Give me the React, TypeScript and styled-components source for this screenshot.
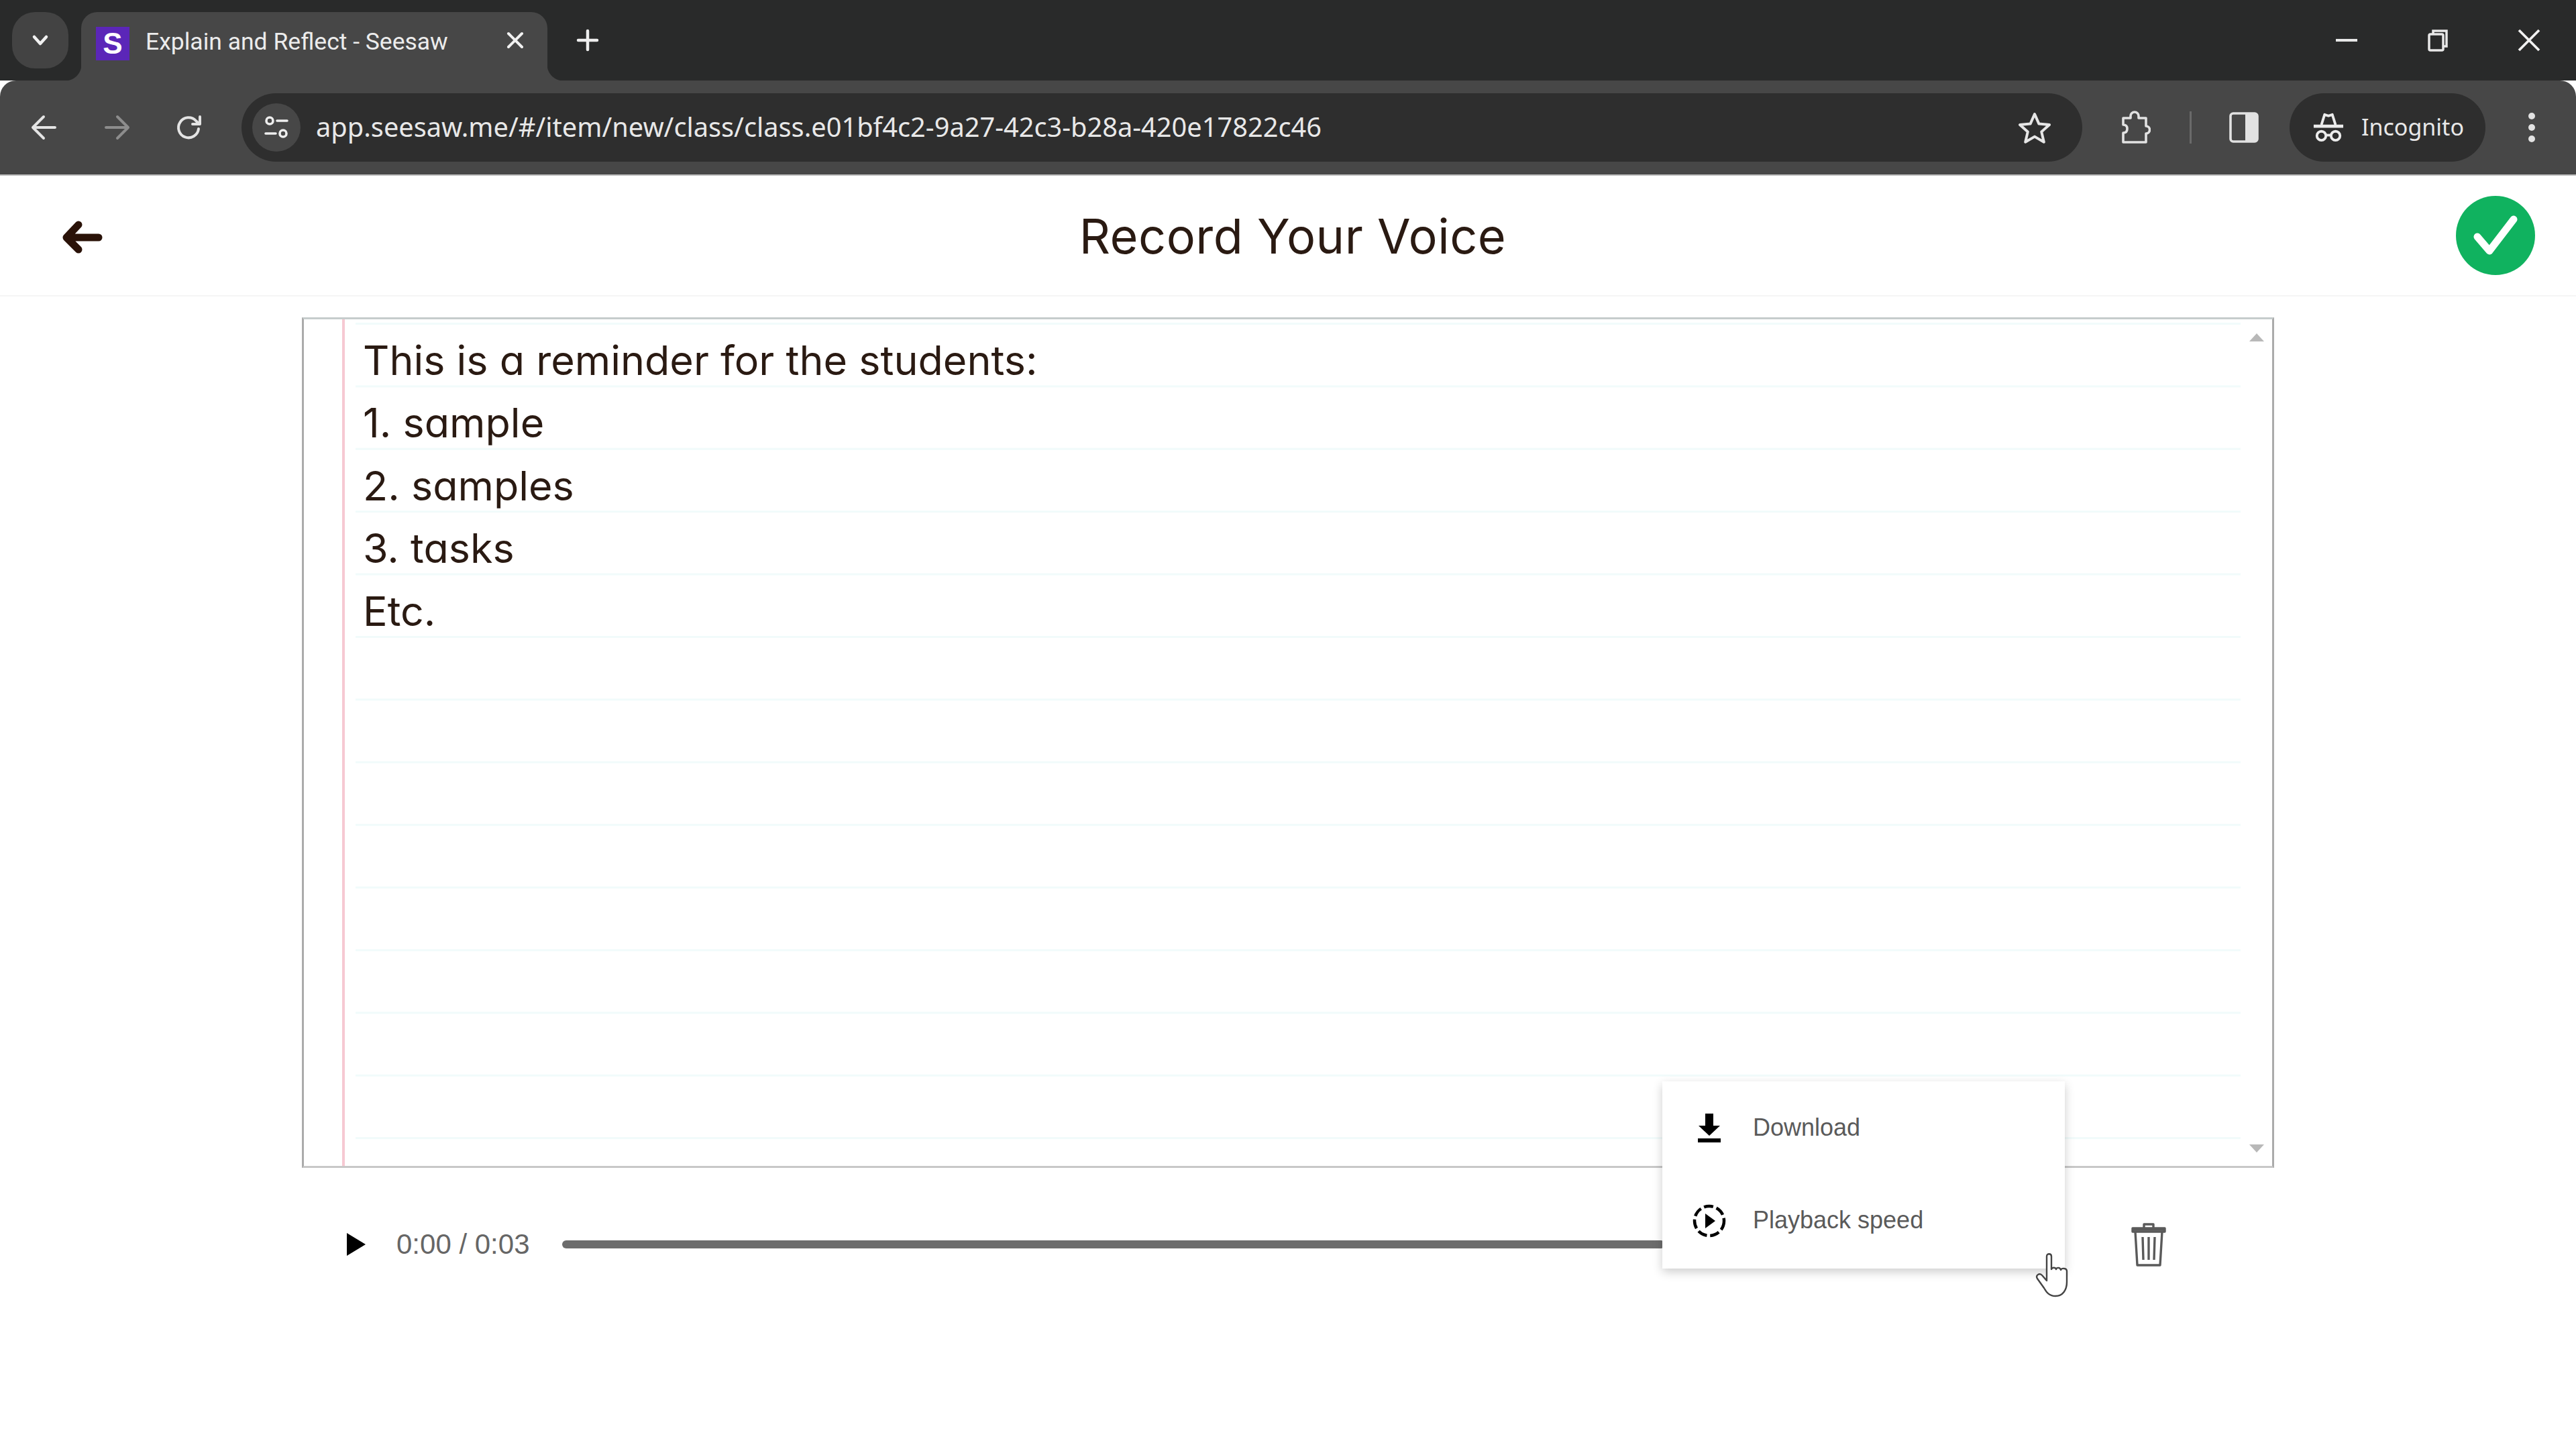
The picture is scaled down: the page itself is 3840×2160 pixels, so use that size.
import React from 'react';
import styled, { createGlobalStyle } from 'styled-components';

const GlobalStyle = createGlobalStyle`
  html, body {
    margin: 0;
    padding: 0;
    background: #ffffff;
  }
`;

const noteLines = ['This is a reminder for the students:', '1. sample', '2. samples', '3. tasks', 'Etc.'];

const App: React.FC = () => {
  return (
    <Page>
      <GlobalStyle />
      <TabStrip>
        <TabListButton>
          <svg width="30" height="30" viewBox="0 0 30 30" fill="none" stroke="#f1f1f1" strokeWidth="4.5" strokeLinecap="round" strokeLinejoin="round">
            <path d="M6 10l9 10 9-10" />
          </svg>
        </TabListButton>
        <Tab>
          <Favicon>S</Favicon>
          <TabTitle>Explain and Reflect - Seesaw</TabTitle>
          <TabClose>
            <svg width="30" height="30" viewBox="0 0 30 30" stroke="#f1f1f1" strokeWidth="4" strokeLinecap="round">
              <path d="M5 5l20 20M25 5L5 25" />
            </svg>
          </TabClose>
        </Tab>
        <NewTab>
          <svg width="34" height="34" viewBox="0 0 34 34" stroke="#eeeeee" strokeWidth="4.5" strokeLinecap="round">
            <path d="M17 3v28M3 17h28" />
          </svg>
        </NewTab>
        <WindowControls>
          <WindowButton>
            <svg width="34" height="8" viewBox="0 0 34 8" stroke="#e8e8e8" strokeWidth="4">
              <path d="M1 4h32" />
            </svg>
          </WindowButton>
          <WindowButton>
            <svg width="32" height="34" viewBox="0 0 32 34" fill="none" stroke="#e8e8e8" strokeWidth="3.5">
              <path d="M9 7V3h20v23h-4" />
              <rect x="3" y="8" width="21" height="24" rx="2" />
            </svg>
          </WindowButton>
          <WindowButton>
            <svg width="34" height="34" viewBox="0 0 34 34" stroke="#f1f1f1" strokeWidth="3.8">
              <path d="M2 2l30 30M32 2L2 32" />
            </svg>
          </WindowButton>
        </WindowControls>
      </TabStrip>

      <Toolbar>
        <NavButton>
          <svg width="40" height="40" viewBox="0 0 40 40" fill="none" stroke="#e4e4e4" strokeWidth="4" strokeLinecap="round" strokeLinejoin="round">
            <path d="M36 20H4M19 4L3 20l16 16" />
          </svg>
        </NavButton>
        <NavButton>
          <svg width="40" height="40" viewBox="0 0 40 40" fill="none" stroke="#8d8d8d" strokeWidth="4" strokeLinecap="round" strokeLinejoin="round">
            <path d="M4 20h32M21 4l16 16-16 16" />
          </svg>
        </NavButton>
        <NavButton>
          <svg width="40" height="40" viewBox="0 0 40 40" fill="none" stroke="#e4e4e4" strokeWidth="4" strokeLinecap="round" strokeLinejoin="round">
            <path d="M34 22a15 15 0 1 1-4-12l5 5" />
            <path d="M36 4v11H25" />
          </svg>
        </NavButton>
        <AddressBar>
          <SiteInfo>
            <svg width="38" height="38" viewBox="0 0 38 38" fill="none" stroke="#eeeeee" strokeWidth="3.6" strokeLinecap="round">
              <circle cx="9" cy="9" r="5" />
              <path d="M20 9h15M3 28h15" />
              <circle cx="29" cy="28" r="5" />
            </svg>
          </SiteInfo>
          <Url>app.seesaw.me/#/item/new/class/class.e01bf4c2-9a27-42c3-b28a-420e17822c46</Url>
          <StarSlot>
            <svg width="50" height="48" viewBox="0 0 50 48" fill="none" stroke="#e6e6e6" strokeWidth="4" strokeLinejoin="round">
              <path d="M25 4l6.4 14.6 15.600 1.400-11.800 10.400 3.600 15.300L25 37.600l-13.800 8.100 3.600-15.300L3 20l15.600-1.400z" />
            </svg>
          </StarSlot>
        </AddressBar>
        <IconSlot $width={158}>
          <svg width="46" height="50" viewBox="0 0 46 50" fill="none" stroke="#e2e2e2" strokeWidth="3.6" strokeLinejoin="round">
            <path d="M5 11h11V8a6 6 0 0 1 12 0v3h11v12a5.500 5.500 0 0 1 0 11v13H5V33c5 0 6-3 6-6s-1-6-6-6z" />
          </svg>
        </IconSlot>
        <ToolbarDivider />
        <IconSlot $width={98}>
          <svg width="44" height="46" viewBox="0 0 44 46" fill="none">
            <rect x="2" y="2" width="40" height="42" rx="4" stroke="#e2e2e2" strokeWidth="3.6" />
            <rect x="24" y="2" width="18" height="42" fill="#e2e2e2" />
          </svg>
        </IconSlot>
        <IncognitoPill>
          <svg width="46" height="46" viewBox="0 0 48 48" fill="none" stroke="#ececec" strokeWidth="4">
            <path d="M13 20l5-16 6 2 6-2 5 16" strokeLinejoin="round" />
            <path d="M1 22h46" strokeWidth="5" />
            <circle cx="13" cy="37" r="7" />
            <circle cx="35" cy="37" r="7" />
            <path d="M20 36h8" />
          </svg>
          <IncognitoLabel>Incognito</IncognitoLabel>
        </IncognitoPill>
        <MenuSlot>
          <svg width="12" height="46" viewBox="0 0 12 46" fill="#e2e2e2">
            <circle cx="6" cy="6" r="5" />
            <circle cx="6" cy="23" r="5" />
            <circle cx="6" cy="40" r="5" />
          </svg>
        </MenuSlot>
      </Toolbar>

      <Header>
        <BackButton>
          <svg width="61" height="49" viewBox="0 0 61 49" fill="none" stroke="#2a1208" strokeWidth="11" strokeLinecap="round" strokeLinejoin="round">
            <path d="M55 25H10M25 6L7 25l18 18" />
          </svg>
        </BackButton>
        <Title>Record Your Voice</Title>
        <DoneButton>
          <svg width="70" height="62" viewBox="0 0 70 62" fill="none" stroke="#ffffff" strokeWidth="11" strokeLinecap="round" strokeLinejoin="round">
            <path d="M8 33l18 21L62 7" />
          </svg>
        </DoneButton>
      </Header>

      <Paper>
        {noteLines.map((line) => (
          <NoteLine key={line}>{line}</NoteLine>
        ))}
        <ScrollArrow $dir="up" />
        <ScrollArrow $dir="down" />
      </Paper>

      <AudioRow>
        <PlayIcon />
        <TimeLabel>0:00 / 0:03</TimeLabel>
        <Slider />
        <TrashSlot>
          <svg width="52" height="66" viewBox="0 0 52 66" fill="none" stroke="#5a5a5a" strokeWidth="3.4" strokeLinejoin="round">
            <path d="M2 11h48M19 9V3h14v6" />
            <path d="M2 9h48v5H2z" />
            <path d="M6 14l3 50h34l3-50" />
            <path d="M17 22l1 34M26 22v34M35 22l-1 34" />
          </svg>
        </TrashSlot>
        <AudioMenu>
          <AudioMenuItem>
            <MenuIconSlot>
              <svg width="46" height="46" viewBox="0 0 46 46" fill="#000000">
                <path d="M17 1h12v18h10L23 34 7 19h10z" />
                <rect x="6" y="38" width="34" height="6" />
              </svg>
            </MenuIconSlot>
            <AudioMenuLabel>Download</AudioMenuLabel>
          </AudioMenuItem>
          <AudioMenuItem>
            <MenuIconSlot>
              <svg width="50" height="50" viewBox="0 0 50 50" fill="none">
                <circle cx="25" cy="25" r="22" stroke="#000000" strokeWidth="4.500" strokeDasharray="14 5" />
                <path d="M19 14l15 11-15 11z" fill="#000000" />
              </svg>
            </MenuIconSlot>
            <AudioMenuLabel>Playback speed</AudioMenuLabel>
          </AudioMenuItem>
        </AudioMenu>
        <HandCursor>
          <svg width="50" height="66" viewBox="0 0 50 66" fill="#ffffff" stroke="#444444" strokeWidth="2.400" strokeLinejoin="round">
            <path d="M17 5c0-5 7-5 7 0v19c1-3 6-3 7 0 1-3 6-3 7 1 1-3 9-3 9 2v16c0 12-6 21-17 21-9 0-13-5-17-12L3 38c-3-5 3-9 7-5l7 8z" />
          </svg>
        </HandCursor>
      </AudioRow>
    </Page>
  );
};

export default App;

const Page = styled.div`
  width: 3840px;
  height: 2160px;
  overflow: hidden;
  background: #ffffff;
`;

const TabStrip = styled.div`
  display: flex;
  align-items: flex-start;
  height: 102px;
  padding: 18px 0 0 18px;
  background: #292a2a;
`;

const TabListButton = styled.div`
  display: flex;
  align-items: center;
  justify-content: center;
  width: 84px;
  height: 84px;
  border-radius: 34px;
  background: #434343;
`;

const Tab = styled.div`
  position: relative;
  z-index: 1;
  display: flex;
  align-items: center;
  width: 695px;
  height: 102px;
  margin-left: 19px;
  padding-left: 22px;
  box-sizing: border-box;
  border-radius: 24px 24px 0 0;
  background: #474747;

  &::before,
  &::after {
    content: '';
    position: absolute;
    bottom: 0;
    width: 24px;
    height: 24px;
  }

  &::before {
    left: -24px;
    background: radial-gradient(circle at 0 0, transparent 24px, #474747 25px);
  }

  &::after {
    right: -24px;
    background: radial-gradient(circle at 100% 0, transparent 24px, #474747 25px);
  }
`;

const Favicon = styled.div`
  display: flex;
  align-items: center;
  justify-content: center;
  width: 50px;
  height: 50px;
  margin-top: -8px;
  background: #5b26b8;
  color: #ffffff;
  font-family: 'Liberation Sans', sans-serif;
  font-size: 44px;
  font-weight: 700;
`;

const TabTitle = styled.div`
  margin-left: 24px;
  margin-top: -14px;
  color: #ececec;
  font-family: Roboto, sans-serif;
  font-size: 35.5px;
  white-space: nowrap;
`;

const TabClose = styled.div`
  position: absolute;
  left: 632px;
  top: 27px;
  display: flex;
`;

const NewTab = styled.div`
  display: flex;
  margin: 25px 0 0 43px;
`;

const WindowControls = styled.div`
  display: flex;
  margin-left: auto;
  margin-right: 2px;
`;

const WindowButton = styled.div`
  display: flex;
  align-items: center;
  justify-content: center;
  width: 136px;
  height: 84px;
`;

const Toolbar = styled.div`
  display: flex;
  align-items: center;
  height: 140px;
  padding-left: 12px;
  border-radius: 24px 24px 0 0;
  border-bottom: 2px solid #bdbdbd;
  background: #474747;
`;

const NavButton = styled.div`
  display: flex;
  align-items: center;
  justify-content: center;
  width: 108px;
  height: 84px;
`;

const AddressBar = styled.div`
  display: flex;
  align-items: center;
  width: 2744px;
  height: 102px;
  margin-left: 24px;
  padding-left: 16px;
  box-sizing: border-box;
  border-radius: 51px;
  background: #2e2e2e;
`;

const SiteInfo = styled.div`
  display: flex;
  align-items: center;
  justify-content: center;
  width: 72px;
  height: 72px;
  border-radius: 50%;
  background: #474747;
`;

const Url = styled.div`
  margin-left: 23px;
  margin-top: -3px;
  color: #e8e8e8;
  font-family: 'Noto Sans', sans-serif;
  font-size: 39.75px;
  white-space: nowrap;
`;

const StarSlot = styled.div`
  display: flex;
  margin-left: auto;
  margin-right: 46px;
`;

const IconSlot = styled.div<{ $width: number }>`
  display: flex;
  align-items: center;
  justify-content: center;
  width: ${(p) => p.$width}px;
`;

const ToolbarDivider = styled.div`
  width: 3px;
  height: 48px;
  margin: 0 29px 0 2px;
  background: #6a6a6a;
`;

const IncognitoPill = styled.div`
  display: flex;
  align-items: center;
  width: 292px;
  height: 102px;
  margin-left: 19px;
  padding-left: 35px;
  box-sizing: border-box;
  border-radius: 51px;
  background: #2e2e2e;
`;

const IncognitoLabel = styled.div`
  margin-left: 26px;
  margin-top: -3px;
  color: #e8e8e8;
  font-family: 'Noto Sans', sans-serif;
  font-size: 34px;
`;

const MenuSlot = styled.div`
  display: flex;
  justify-content: center;
  width: 130px;
  margin-left: 4px;
`;

const Header = styled.div`
  display: flex;
  align-items: center;
  justify-content: space-between;
  height: 178px;
  padding: 0 61px 0 92px;
  border-bottom: 2px solid #f5f5f5;
`;

const BackButton = styled.div`
  display: flex;
  margin-top: 4px;
`;

const Title = styled.div`
  margin-left: 40px;
  color: #2a1a12;
  font-family: Inter, Lato, sans-serif;
  font-feature-settings: 'cv11';
  font-size: 72px;
  letter-spacing: 0.5px;
`;

const DoneButton = styled.div`
  display: flex;
  align-items: center;
  justify-content: center;
  width: 118px;
  height: 118px;
  border-radius: 50%;
  background: #10b25f;
`;

const Paper = styled.div`
  position: relative;
  width: 2940px;
  height: 1268px;
  margin: 31px 0 0 450px;
  padding: 15px 0 0 88px;
  box-sizing: border-box;
  border: 3px solid #ababab;
  border-top-color: #c6cccc;
  border-bottom-color: #c8c8c8;
  background-color: #ffffff;
  background-image: linear-gradient(#f6c9d2, #f6c9d2),
    linear-gradient(to bottom, transparent 90.4px, #f1fbfb 90.4px, #f1fbfb 93.4px);
  background-repeat: no-repeat, repeat-y;
  background-size: 4px 100%, 2810px 93.4px;
  background-position: 57px 0, 77px 8px;
`;

const NoteLine = styled.div`
  height: 93.4px;
  color: #2a1a12;
  font-family: Inter, Lato, sans-serif;
  font-feature-settings: 'cv11';
  font-size: 61px;
  line-height: 93.4px;
  white-space: nowrap;
`;

const ScrollArrow = styled.div<{ $dir: 'up' | 'down' }>`
  position: absolute;
  right: 12px;
  ${(p) => (p.$dir === 'up' ? 'top: 21px;' : 'bottom: 20px;')}
  width: 0;
  height: 0;
  border-left: 11px solid transparent;
  border-right: 11px solid transparent;
  ${(p) => (p.$dir === 'up' ? 'border-bottom: 12px solid #b8b8b8;' : 'border-top: 12px solid #b8b8b8;')}
`;

const AudioRow = styled.div`
  position: relative;
  display: flex;
  align-items: center;
  height: 120px;
  margin: 54px 0 0 517px;
`;

const PlayIcon = styled.div`
  width: 0;
  height: 0;
  border-top: 17px solid transparent;
  border-bottom: 17px solid transparent;
  border-left: 28px solid #000000;
`;

const TimeLabel = styled.div`
  margin-left: 46px;
  color: #666666;
  font-family: 'Liberation Sans', sans-serif;
  font-size: 42px;
  white-space: nowrap;
`;

const Slider = styled.div`
  width: 1644px;
  height: 12px;
  margin-left: 48px;
  border-radius: 6px;
  background: #6c6c6c;
`;

const TrashSlot = styled.div`
  display: flex;
  margin-left: 695px;
`;

const AudioMenu = styled.div`
  position: absolute;
  left: 1961px;
  top: -183px;
  width: 600px;
  height: 279px;
  padding-top: 1px;
  box-sizing: border-box;
  background: #ffffff;
  box-shadow: 0 5px 14px rgba(0, 0, 0, 0.2);
`;

const AudioMenuItem = styled.div`
  display: flex;
  align-items: center;
  height: 138px;
  padding-left: 45px;
`;

const MenuIconSlot = styled.div`
  display: flex;
  justify-content: center;
  width: 50px;
  margin-right: 40px;
`;

const AudioMenuLabel = styled.div`
  margin-top: -2px;
  color: #5a5a5a;
  font-family: 'Liberation Sans', sans-serif;
  font-size: 36px;
  white-space: nowrap;
`;

const HandCursor = styled.div`
  position: absolute;
  left: 2517px;
  top: 73px;
  display: flex;
`;
